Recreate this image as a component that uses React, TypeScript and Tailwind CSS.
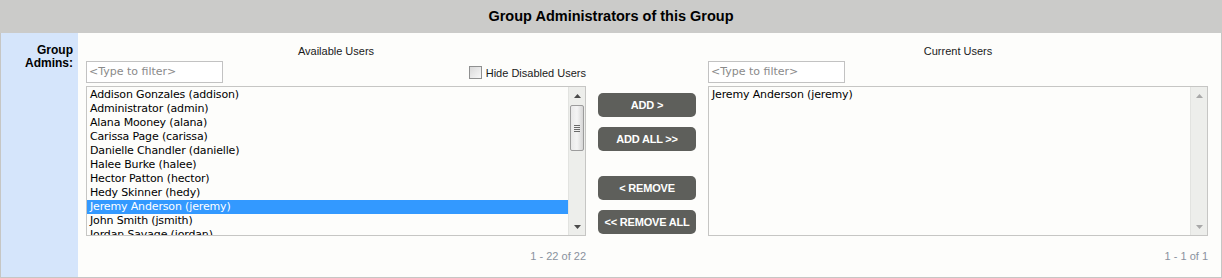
import React from 'react'

const availableUsers = [
    'Addison Gonzales (addison)',
    'Administrator (admin)',
    'Alana Mooney (alana)',
    'Carissa Page (carissa)',
    'Danielle Chandler (danielle)',
    'Halee Burke (halee)',
    'Hector Patton (hector)',
    'Hedy Skinner (hedy)',
    'Jeremy Anderson (jeremy)',
    'John Smith (jsmith)',
    'Jordan Savage (jordan)',
]

const currentUsers = ['Jeremy Anderson (jeremy)']

function Scrollbar({ enabled }: { enabled: boolean }) {
    const arrow = enabled ? 'text-[#4a4a4a]' : 'text-[#a8a8a8]'
    return (
        <div className="w-[17px] h-full bg-[#edeeeb] border-l border-[#e2e3e0] flex flex-col items-center">
            <div className={`h-[17px] w-full flex items-center justify-center ${arrow}`}>
                <svg width="7" height="4" viewBox="0 0 7 4">
                    <path d="M0 4 L3.5 0 L7 4 Z" fill="currentColor" />
                </svg>
            </div>
            <div className="flex-1 w-full px-[1px]">
                {enabled && (
                    <div className="h-[46px] mt-[1px] rounded-[2px] border border-[#9c9c9c] bg-gradient-to-r from-[#e9e9e9] via-[#f4f4f4] to-[#d6d6d6] flex flex-col items-center justify-center gap-[1px]">
                        <div className="w-[6px] h-[1px] bg-[#6a6a6a]" />
                        <div className="w-[6px] h-[1px] bg-[#6a6a6a]" />
                        <div className="w-[6px] h-[1px] bg-[#6a6a6a]" />
                        <div className="w-[6px] h-[1px] bg-[#6a6a6a]" />
                    </div>
                )}
            </div>
            <div className={`h-[17px] w-full flex items-center justify-center ${arrow}`}>
                <svg width="7" height="4" viewBox="0 0 7 4">
                    <path d="M0 0 L7 0 L3.5 4 Z" fill="currentColor" />
                </svg>
            </div>
        </div>
    )
}

function UserList({ users, selected }: { users: string[]; selected?: string }) {
    return (
        <div className="mt-[3px] h-[150px] border border-[#c6c6c4] bg-[#fdfdfb] flex overflow-hidden">
            <div className="flex-1 pt-[1px] overflow-hidden font-['DejaVu_Sans',Tahoma,sans-serif] text-[11px] leading-[14px] tracking-[-0.15px]">
                {users.map((u) => (
                    <div
                        key={u}
                        className={
                            u === selected
                                ? 'h-[14px] px-[3px] bg-[#3399ff] text-white whitespace-nowrap'
                                : 'h-[14px] px-[3px] text-black whitespace-nowrap'
                        }
                    >
                        {u}
                    </div>
                ))}
            </div>
            <Scrollbar enabled={users.length > 10} />
        </div>
    )
}

function FilterInput() {
    return (
        <div className="w-[137px] h-[22px] border border-[#c2c2c2] bg-white flex items-center pl-[2px] pt-[1px] font-['DejaVu_Sans',Tahoma,sans-serif] text-[11px] text-[#8a8a8a]">
            &lt;Type to filter&gt;
        </div>
    )
}

function ActionButton({ label, className }: { label: string; className?: string }) {
    return (
        <button
            className={`w-[98px] h-[24px] rounded-[5px] bg-[#5e5f5b] text-white font-bold text-[11px] tracking-[-0.2px] flex items-center justify-center ${className ?? ''}`}
        >
            {label}
        </button>
    )
}

export default function App() {
    return (
        <div className="w-[1222px] h-[278px] bg-white font-['Liberation_Sans',Arial,sans-serif] text-[#1a1a1a]">
            <div className="h-[33px] bg-[#cbcbc9] flex items-center justify-center text-[14.5px] font-bold text-black">
                Group Administrators of this Group
            </div>

            <div className="flex h-[245px] border-l border-r border-b border-[#c6c6c4]">
                {/* Label column */}
                <div className="w-[77px] bg-[#d5e5fb] pt-[11px] pr-[5px] text-right font-bold text-[12px] leading-[13px] text-black">
                    Group
                    <br />
                    Admins:
                </div>

                <div className="flex-1 bg-[#fdfdfb] flex pl-[8px] pt-[11px] gap-[12px]">
                    {/* Available users */}
                    <div className="w-[500px] flex flex-col">
                        <div className="h-[14px] leading-[14px] text-center text-[11px]">Available Users</div>
                        <div className="mt-[3px] flex items-start justify-between">
                            <FilterInput />
                            <div className="flex items-center mt-[3px] text-[11px]">
                                <div className="w-[13px] h-[13px] border border-[#8f9090] bg-gradient-to-br from-[#d9d9d9] to-[#f8f8f8]" />
                                <span className="ml-[4px] mt-[3px] leading-[13px]">Hide Disabled Users</span>
                            </div>
                        </div>
                        <UserList users={availableUsers} selected="Jeremy Anderson (jeremy)" />
                        <div className="mt-[13px] text-right text-[11px] leading-[14px] text-[#8a929e]">1 - 22 of 22</div>
                    </div>

                    {/* Move buttons */}
                    <div className="w-[98px] flex flex-col pt-[49px]">
                        <ActionButton label="ADD >" />
                        <ActionButton label="ADD ALL >>" className="mt-[10px]" />
                        <ActionButton label="< REMOVE" className="mt-[25px]" />
                        <ActionButton label="<< REMOVE ALL" className="mt-[10px]" />
                    </div>

                    {/* Current users */}
                    <div className="w-[500px] flex flex-col">
                        <div className="h-[14px] leading-[14px] text-center text-[11px]">Current Users</div>
                        <div className="mt-[3px] flex">
                            <FilterInput />
                        </div>
                        <UserList users={currentUsers} />
                        <div className="mt-[13px] text-right text-[11px] leading-[14px] text-[#8a929e]">1 - 1 of 1</div>
                    </div>
                </div>
            </div>
        </div>
    )
}
